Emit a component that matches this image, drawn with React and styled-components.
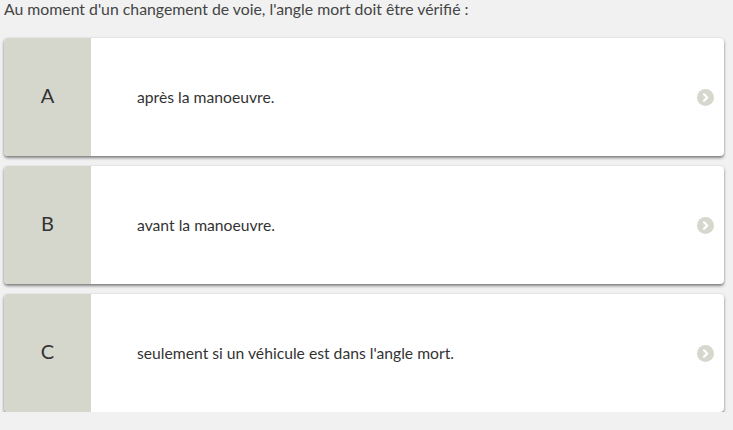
import React from 'react';
import styled, { createGlobalStyle } from 'styled-components';

const GlobalStyle = createGlobalStyle`
  html, body {
    margin: 0;
    padding: 0;
    background: #f1f1f1;
    font-family: Lato, 'Open Sans', sans-serif;
  }
`;

const Page = styled.div`
  padding: 0 9px 0 4px;
`;

const Question = styled.div`
  font-size: 15.8px;
  line-height: 18px;
  color: #444;
  margin-bottom: 20px;
`;

const List = styled.div`
  display: flex;
  flex-direction: column;
  gap: 10px;
`;

const Card = styled.div`
  display: flex;
  align-items: stretch;
  height: 118px;
  background: #fff;
  border-radius: 4px;
  overflow: hidden;
  box-shadow: 0 2px 3px rgba(0, 0, 0, 0.45), 0 0 2px rgba(0, 0, 0, 0.12);
  cursor: pointer;
`;

const Letter = styled.div`
  width: 87px;
  flex: none;
  display: flex;
  align-items: center;
  justify-content: center;
  padding-bottom: 5px;
  box-sizing: border-box;
  background: #d5d7cd;
  color: #333;
  font-size: 20px;
`;

const Answer = styled.div`
  flex: 1;
  display: flex;
  align-items: center;
  padding-left: 46px;
  font-size: 15.7px;
  color: #333;
`;

const Arrow = styled.div`
  flex: none;
  display: flex;
  align-items: center;
  padding-right: 10px;
  svg {
    display: block;
  }
`;

const answers = [
  { key: 'A', text: 'après la manoeuvre.' },
  { key: 'B', text: 'avant la manoeuvre.' },
  { key: 'C', text: "seulement si un véhicule est dans l'angle mort." },
];

const Chevron = () => (
  <svg width="17" height="17" viewBox="0 0 17 17">
    <circle cx="8.5" cy="8.5" r="8.5" fill="#d6d8ce" />
    <path d="M7 5.2 L10.3 8.5 L7 11.8" fill="none" stroke="#fff" strokeWidth="2.2" strokeLinecap="round" strokeLinejoin="round" />
  </svg>
);

export default function App() {
  return (
    <Page>
      <GlobalStyle />
      <Question>Au moment d'un changement de voie, l'angle mort doit être vérifié&nbsp;:</Question>
      <List>
        {answers.map((a) => (
          <Card key={a.key}>
            <Letter>{a.key}</Letter>
            <Answer>{a.text}</Answer>
            <Arrow>
              <Chevron />
            </Arrow>
          </Card>
        ))}
      </List>
    </Page>
  );
}
